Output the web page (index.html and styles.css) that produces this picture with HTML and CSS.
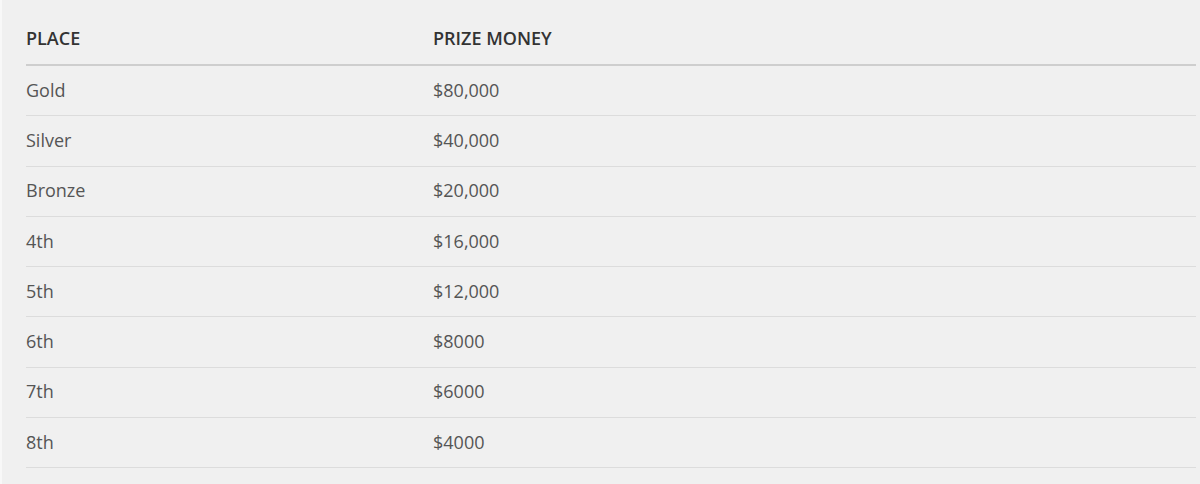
FILE: index.html
```html
<!DOCTYPE html>
<html>
<head>
<meta charset="utf-8">
<link rel="stylesheet" href="styles.css">
</head>
<body>
<div class="page">
  <table class="prizes">
    <thead>
      <tr><th class="col-place">Place</th><th>Prize Money</th></tr>
    </thead>
    <tbody>
      <tr><td>Gold</td><td>$80,000</td></tr>
      <tr><td>Silver</td><td>$40,000</td></tr>
      <tr><td>Bronze</td><td>$20,000</td></tr>
      <tr><td>4th</td><td>$16,000</td></tr>
      <tr><td>5th</td><td>$12,000</td></tr>
      <tr><td>6th</td><td>$8000</td></tr>
      <tr><td>7th</td><td>$6000</td></tr>
      <tr><td>8th</td><td>$4000</td></tr>
    </tbody>
  </table>
</div>
</body>
</html>
```
FILE: styles.css
```css
html, body {
  margin: 0;
  padding: 0;
  background: #f0f0f0;
}
.page {
  height: 484px;
  box-sizing: border-box;
  padding: 0 4px 0 24px;
  border-left: 2px solid #f8f8f8;
  font-family: "Open Sans", "Liberation Sans", sans-serif;
}
.prizes {
  width: 100%;
  border-collapse: collapse;
  table-layout: fixed;
}
.prizes th {
  text-align: left;
  text-transform: uppercase;
  font-weight: 600;
  font-size: 18px;
  color: #333;
  height: 65px;
  padding: 12px 0 0 0;
  box-sizing: border-box;
  border-bottom: 2px solid #cecece;
}
.prizes .col-place {
  width: 407px;
}
.prizes td {
  font-size: 18px;
  color: #555;
  height: 47.3px;
  padding: 0 0 2px 0;
  box-sizing: content-box;
  border-bottom: 1px solid #dcdcdc;
}
```
